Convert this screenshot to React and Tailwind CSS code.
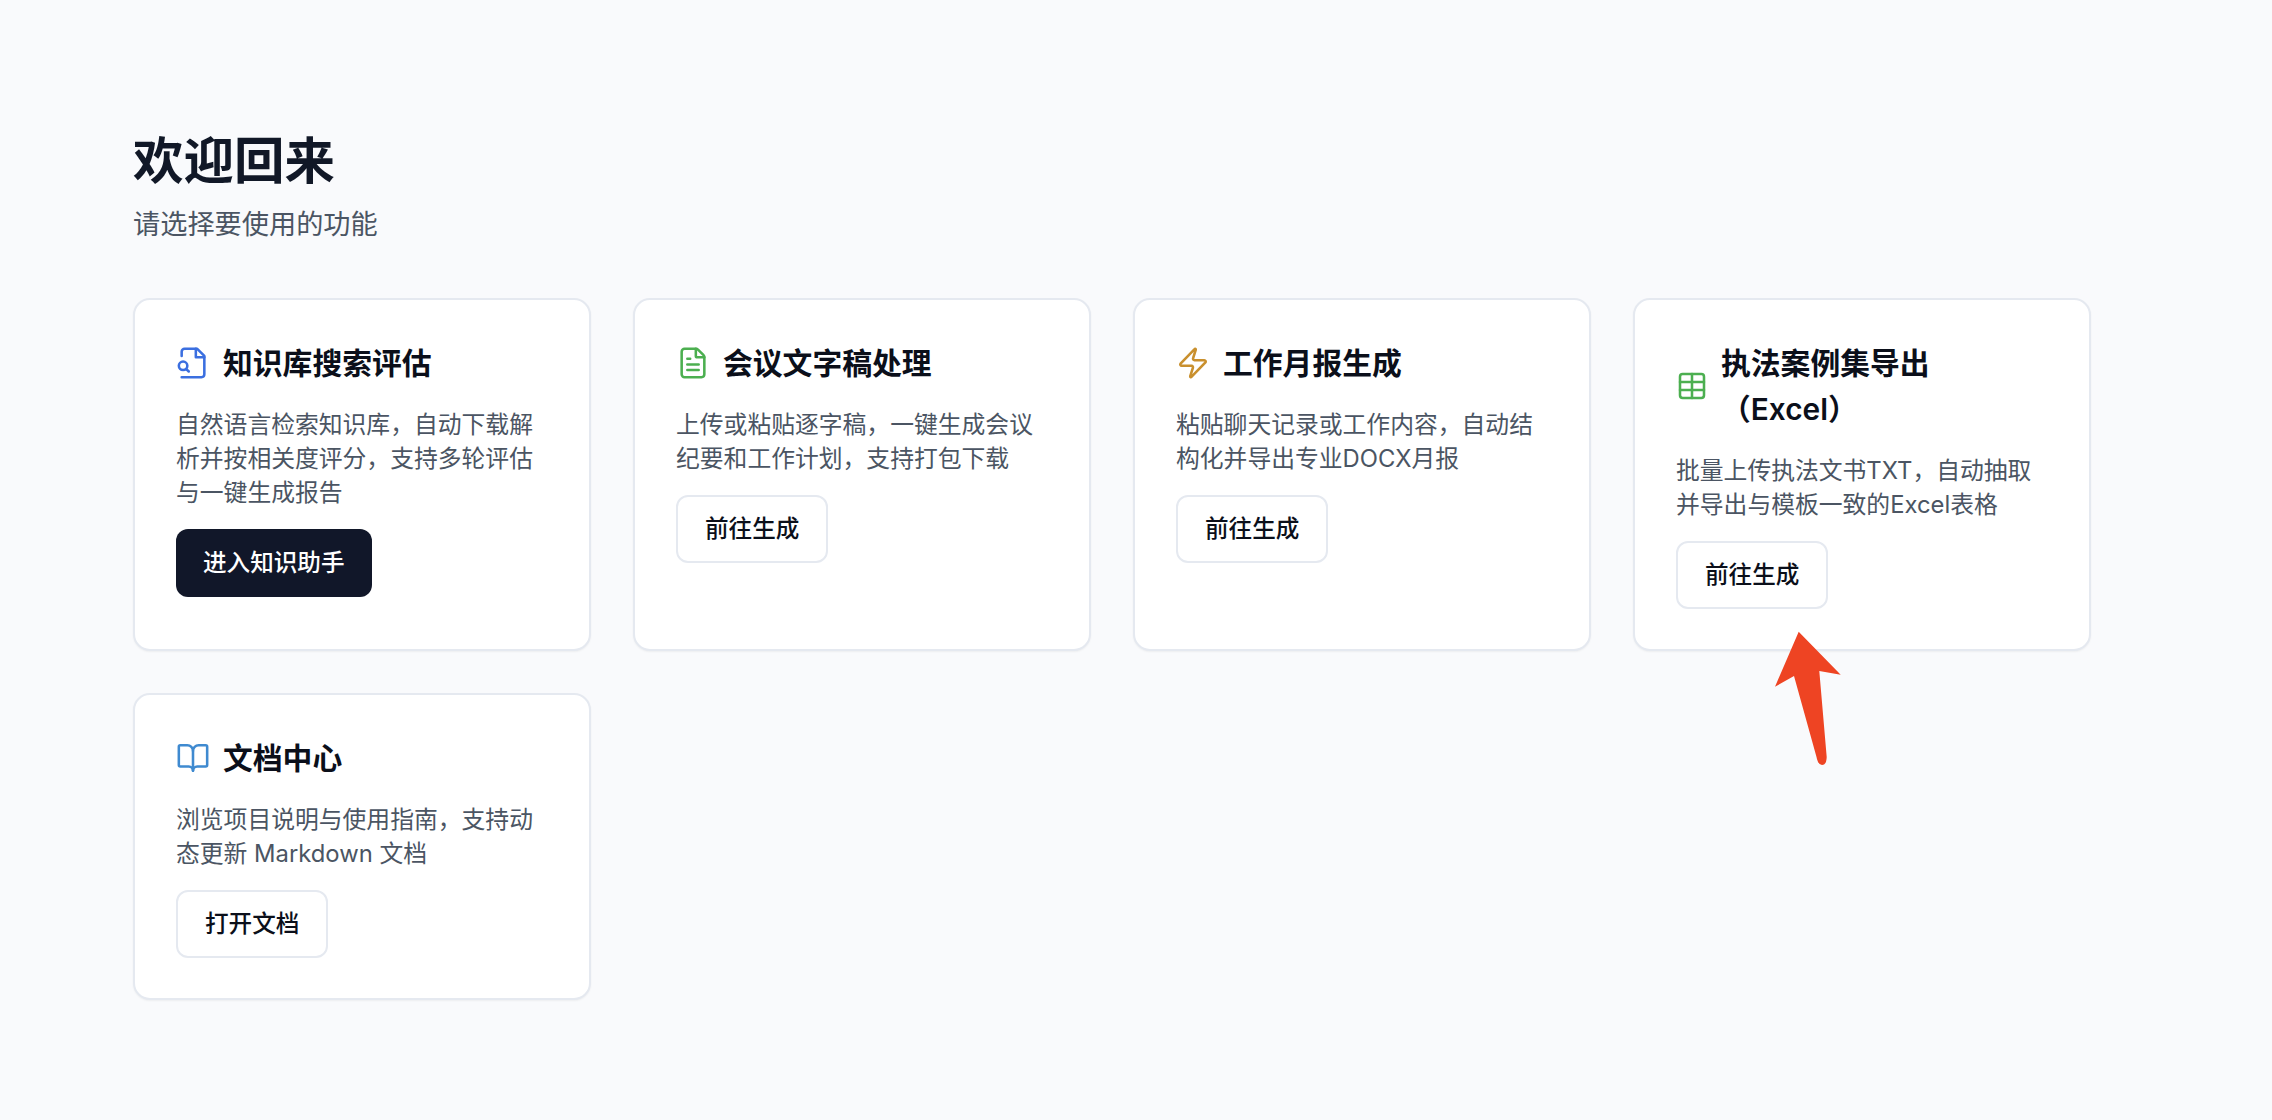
import { FileText, Zap, Table, BookOpen } from "lucide-react";

// older lucide file-search shape, with the lens sitting on the left edge
function FileSearchIcon({ className }) {
  return (
    <svg
      className={className}
      viewBox="0 0 24 24"
      fill="none"
      stroke="currentColor"
      strokeWidth={1.8}
      strokeLinecap="round"
      strokeLinejoin="round"
    >
      <path d="M4 22h14a2 2 0 0 0 2-2V7l-5-5H6a2 2 0 0 0-2 2v3" />
      <path d="M14 2v6h6" />
      <circle cx="5" cy="14" r="3" />
      <path d="m9 18-1.5-1.5" />
    </svg>
  );
}

const iconClass = "w-[34px] h-[34px] shrink-0";

const cards = [
  {
    title: "知识库搜索评估",
    desc: "自然语言检索知识库，自动下载解析并按相关度评分，支持多轮评估与一键生成报告",
    action: "进入知识助手",
    primary: true,
    icon: <FileSearchIcon className={`${iconClass} text-[#3b6fe0]`} />,
  },
  {
    title: "会议文字稿处理",
    desc: "上传或粘贴逐字稿，一键生成会议纪要和工作计划，支持打包下载",
    action: "前往生成",
    icon: <FileText strokeWidth={1.8} className={`${iconClass} text-[#4caf50]`} />,
  },
  {
    title: "工作月报生成",
    desc: "粘贴聊天记录或工作内容，自动结构化并导出专业DOCX月报",
    action: "前往生成",
    icon: <Zap strokeWidth={1.8} className={`${iconClass} text-[#c9902e]`} />,
  },
  {
    title: "执法案例集导出（Excel）",
    desc: "批量上传执法文书TXT，自动抽取并导出与模板一致的Excel表格",
    action: "前往生成",
    icon: <Table strokeWidth={1.9} className="w-[32px] h-[32px] shrink-0 text-[#4caf50]" />,
  },
  {
    title: "文档中心",
    desc: "浏览项目说明与使用指南，支持动态更新 Markdown 文档",
    action: "打开文档",
    icon: <BookOpen strokeWidth={1.8} className={`${iconClass} text-[#3f8ad0]`} />,
  },
];

function Card({ card }) {
  return (
    <div className="bg-white border-2 border-[#e5e9f0] rounded-[17px] shadow-[0_1px_2px_rgba(0,0,0,0.05)] px-[41px] pt-[40px] pb-[40px]">
      <div className="flex items-center gap-[13px]">
        {card.icon}
        <h3 className="text-[29.8px] leading-[46px] font-semibold text-[#0b0f1a]">{card.title}</h3>
      </div>
      <p className="mt-[22px] text-[23.8px] leading-[34px] text-[#4b5563]">{card.desc}</p>
      {card.primary ? (
        <button className="mt-[19px] h-[68px] px-[27px] rounded-[12px] bg-[#111729] text-white text-[23.6px] font-medium">
          {card.action}
        </button>
      ) : (
        <button className="mt-[19px] h-[68px] px-[27px] rounded-[12px] bg-white border-2 border-[#e5e9f0] text-[#0b0f1a] text-[23.6px] font-medium">
          {card.action}
        </button>
      )}
    </div>
  );
}

export default function App() {
  return (
    <div className="relative min-h-[1120px] bg-[#f9fafc] pl-[133px] pr-[181px] pt-[126px] font-['Inter','Noto_Sans_CJK_SC',sans-serif]">
      <h1 className="text-[50.5px] leading-[70px] font-bold text-[#111827]">欢迎回来</h1>
      <p className="mt-[9px] text-[27.2px] leading-[40px] text-[#4b5563]">请选择要使用的功能</p>
      <div className="mt-[53px] grid grid-cols-4 gap-[42px]">
        {cards.map((card) => (
          <Card key={card.title} card={card} />
        ))}
      </div>
      {/* red annotation arrow */}
      <svg className="absolute left-[1770px] top-[625px] w-[80px] h-[145px]" viewBox="1770 625 80 145">
        <path
          d="M1798.7 631.7L1840.7 674.7L1819.3 671L1826.7 757Q1826.5 765 1822 765Q1818 765 1816.5 757L1794 676L1775 686.7Z"
          fill="#ee4423"
        />
      </svg>
    </div>
  );
}
